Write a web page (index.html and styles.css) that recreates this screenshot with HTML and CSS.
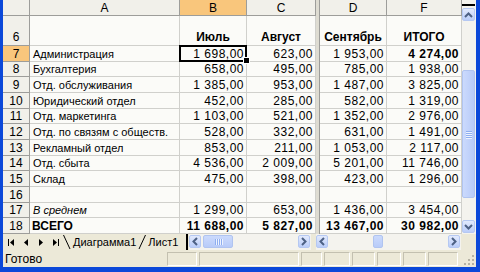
FILE: index.html
```html
<!DOCTYPE html>
<html lang="ru">
<head>
    <meta charset="UTF-8">
    <meta name="viewport" content="width=device-width, initial-scale=1.0">
    <title>Отчёт по отделам</title>
    <link rel="stylesheet" href="styles.css">
</head>
<body>
    <div class="window">
        <div class="main">
            <div class="sheet">
                <div class="row head">
                    <div class="cell hdr"></div>
                    <div class="cell hdr">A</div>
                    <div class="cell hdr active">B</div>
                    <div class="cell hdr">C</div>
                    <div class="split"></div>
                    <div class="cell hdr">D</div>
                    <div class="cell hdr">F</div>
                </div>
                <div class="row tall">
                    <div class="cell hdr">6</div>
                    <div class="cell"></div>
                    <div class="cell mid b">Июль</div>
                    <div class="cell mid b">Август</div>
                    <div class="split"></div>
                    <div class="cell mid b">Сентябрь</div>
                    <div class="cell mid b">ИТОГО</div>
                </div>
                <div class="row">
                    <div class="cell hdr active">7</div>
                    <div class="cell txt">Администрация</div>
                    <div class="cell num sel">1 698,00</div>
                    <div class="cell num">623,00</div>
                    <div class="split"></div>
                    <div class="cell num">1 953,00</div>
                    <div class="cell num b">4 274,00</div>
                </div>
                <div class="row short">
                    <div class="cell hdr">8</div>
                    <div class="cell txt">Бухгалтерия</div>
                    <div class="cell num">658,00</div>
                    <div class="cell num">495,00</div>
                    <div class="split"></div>
                    <div class="cell num">785,00</div>
                    <div class="cell num">1 938,00</div>
                </div>
                <div class="row">
                    <div class="cell hdr">9</div>
                    <div class="cell txt">Отд. обслуживания</div>
                    <div class="cell num">1 385,00</div>
                    <div class="cell num">953,00</div>
                    <div class="split"></div>
                    <div class="cell num">1 487,00</div>
                    <div class="cell num">3 825,00</div>
                </div>
                <div class="row">
                    <div class="cell hdr">10</div>
                    <div class="cell txt">Юридический отдел</div>
                    <div class="cell num">452,00</div>
                    <div class="cell num">285,00</div>
                    <div class="split"></div>
                    <div class="cell num">582,00</div>
                    <div class="cell num">1 319,00</div>
                </div>
                <div class="row short">
                    <div class="cell hdr">11</div>
                    <div class="cell txt">Отд. маркетинга</div>
                    <div class="cell num">1 103,00</div>
                    <div class="cell num">521,00</div>
                    <div class="split"></div>
                    <div class="cell num">1 352,00</div>
                    <div class="cell num">2 976,00</div>
                </div>
                <div class="row">
                    <div class="cell hdr">12</div>
                    <div class="cell txt">Отд. по связям с обществ.</div>
                    <div class="cell num">528,00</div>
                    <div class="cell num">332,00</div>
                    <div class="split"></div>
                    <div class="cell num">631,00</div>
                    <div class="cell num">1 491,00</div>
                </div>
                <div class="row">
                    <div class="cell hdr">13</div>
                    <div class="cell txt">Рекламный отдел</div>
                    <div class="cell num">853,00</div>
                    <div class="cell num">211,00</div>
                    <div class="split"></div>
                    <div class="cell num">1 053,00</div>
                    <div class="cell num">2 117,00</div>
                </div>
                <div class="row short">
                    <div class="cell hdr">14</div>
                    <div class="cell txt">Отд. сбыта</div>
                    <div class="cell num">4 536,00</div>
                    <div class="cell num">2 009,00</div>
                    <div class="split"></div>
                    <div class="cell num">5 201,00</div>
                    <div class="cell num">11 746,00</div>
                </div>
                <div class="row">
                    <div class="cell hdr">15</div>
                    <div class="cell txt">Склад</div>
                    <div class="cell num">475,00</div>
                    <div class="cell num">398,00</div>
                    <div class="split"></div>
                    <div class="cell num">423,00</div>
                    <div class="cell num">1 296,00</div>
                </div>
                <div class="row">
                    <div class="cell hdr">16</div>
                    <div class="cell"></div>
                    <div class="cell"></div>
                    <div class="cell"></div>
                    <div class="split"></div>
                    <div class="cell"></div>
                    <div class="cell"></div>
                </div>
                <div class="row short">
                    <div class="cell hdr">17</div>
                    <div class="cell txt i">В среднем</div>
                    <div class="cell num">1 299,00</div>
                    <div class="cell num">653,00</div>
                    <div class="split"></div>
                    <div class="cell num">1 436,00</div>
                    <div class="cell num">3 454,00</div>
                </div>
                <div class="row">
                    <div class="cell hdr">18</div>
                    <div class="cell b">ВСЕГО</div>
                    <div class="cell num b">11 688,00</div>
                    <div class="cell num b">5 827,00</div>
                    <div class="split"></div>
                    <div class="cell num b">13 467,00</div>
                    <div class="cell num b">30 982,00</div>
                </div>
            </div>

            <!-- vertical scrollbar -->
            <div class="vscroll">
                <div class="vsplit"></div>
                <div class="sbtn">
                    <svg width="9" height="6" viewBox="0 0 9 6"><path d="M1 5 L4.5 1.5 L8 5" /></svg>
                </div>
                <div class="vthumb">
                    <span></span><span></span><span></span><span></span>
                </div>
                <div class="sbtn down">
                    <svg width="9" height="6" viewBox="0 0 9 6"><path d="M1 1 L4.5 4.5 L8 1" /></svg>
                </div>
            </div>
        </div>

        <div class="tabbar">
            <div class="tabnav">
                <span class="navbtn"><svg width="6" height="7" viewBox="0 0 6 7"><rect x="0" y="0" width="1" height="7" /><path d="M6 0 L2 3.5 L6 7 Z" /></svg></span>
                <span class="navbtn"><svg width="4" height="7" viewBox="0 0 4 7"><path d="M4 0 L0 3.5 L4 7 Z" /></svg></span>
                <span class="navbtn"><svg width="4" height="7" viewBox="0 0 4 7"><path d="M0 0 L4 3.5 L0 7 Z" /></svg></span>
                <span class="navbtn"><svg width="6" height="7" viewBox="0 0 6 7"><path d="M0 0 L4 3.5 L0 7 Z" /><rect x="5" y="0" width="1" height="7" /></svg></span>
            </div>
            <div class="tabs">
                <svg class="slant" width="8" height="16" viewBox="0 0 8 16"><path d="M0.5 1 L7 15" /></svg>
                <span class="tab">Диаграмма1</span>
                <svg class="slant" width="8" height="16" viewBox="0 0 8 16"><path d="M1 15 L7.5 1" /></svg>
                <span class="tab">Лист1</span>
            </div>
            <div class="tabsplit"></div>
            <div class="hscroll pane-left">
                <div class="sbtn">
                    <svg width="6" height="9" viewBox="0 0 6 9"><path d="M5 1 L1.5 4.5 L5 8" /></svg>
                </div>
                <div class="hthumb">
                    <span></span><span></span><span></span><span></span>
                </div>
                <div class="sbtn end">
                    <svg width="6" height="9" viewBox="0 0 6 9"><path d="M1 1 L4.5 4.5 L1 8" /></svg>
                </div>
            </div>
            <div class="hgap"></div>
            <div class="hscroll pane-right">
                <div class="sbtn">
                    <svg width="6" height="9" viewBox="0 0 6 9"><path d="M5 1 L1.5 4.5 L5 8" /></svg>
                </div>
                <div class="hthumb small"></div>
                <div class="sbtn end">
                    <svg width="6" height="9" viewBox="0 0 6 9"><path d="M1 1 L4.5 4.5 L1 8" /></svg>
                </div>
            </div>
        </div>

        <div class="statusbar">
            <span class="status-text">Готово</span>
            <div class="panels">
                <div class="panel w30"></div>
                <div class="panel w100"></div>
                <div class="panel w21"></div>
                <div class="panel w26"></div>
                <div class="panel w23"></div>
                <div class="panel w24"></div>
                <div class="panel w23"></div>
                <div class="panel w30"></div>
            </div>
            <svg class="grip" width="11" height="11" viewBox="0 0 11 11">
                <rect x="8" y="0" width="2" height="2" />
                <rect x="4" y="4" width="2" height="2" />
                <rect x="8" y="4" width="2" height="2" />
                <rect x="0" y="8" width="2" height="2" />
                <rect x="4" y="8" width="2" height="2" />
                <rect x="8" y="8" width="2" height="2" />
            </svg>
        </div>
    </div>
</body>
</html>
```

FILE: styles.css
```css
/* General Styles */
* {
    box-sizing: border-box;
}

body {
    margin: 0;
    font-family: "Liberation Sans", Arial, sans-serif;
    font-size: 12px;
    color: #000;
}

.window {
    width: 480px;
    height: 272px;
    display: flex;
    flex-direction: column;
    border-left: 3px solid #0b48d9;
    border-right: 4px solid #0b48d9;
    border-bottom: 5px solid #0b48d9;
    background: #ece9d8;
    overflow: hidden;
}

.main {
    display: flex;
    height: 234px;
}

/* Grid */
.sheet {
    width: 459px;
    background: #fbfbf8;
}

.row {
    display: grid;
    grid-template-columns: 27px 150px 67px 69px 4px 67px 75px;
    height: 16px;
}

.row.head {
    height: 16px;
}

.row.tall {
    height: 30px;
}

.row.short {
    height: 15px;
}

.cell {
    display: flex;
    align-items: center;
    padding: 0 2px;
    line-height: 14px;
    white-space: nowrap;
    overflow: hidden;
    border-right: 1px solid #d0d0cc;
    border-bottom: 1px solid #d0d0cc;
}

.txt {
    font-size: 11px;
    padding-left: 3px;
}

.hdr {
    justify-content: center;
    background: #f1f0ea;
    border-color: #9d9d9a;
}

.hdr.active {
    background: #f9c67c;
}

.tall .cell {
    align-items: flex-end;
    padding-bottom: 1px;
}

.mid {
    justify-content: center;
}

.num {
    justify-content: flex-end;
    letter-spacing: 0.5px;
}

.b {
    font-weight: bold;
}

.i {
    font-style: italic;
}

.split {
    background: #dedcd2;
    border-right: 1px solid #9d9d9a;
}

.sel {
    position: relative;
    overflow: visible;
}

.sel::before {
    content: "";
    position: absolute;
    left: -1px;
    top: -1px;
    right: -1px;
    bottom: -1px;
    border: 2px solid #000;
}

.sel::after {
    content: "";
    position: absolute;
    right: -4px;
    bottom: -3px;
    width: 5px;
    height: 5px;
    background: #000;
    border: 1px solid #fff;
}

/* Scrollbars */
.vscroll {
    width: 14px;
    display: flex;
    flex-direction: column;
    background: #f4f3ee;
    padding-top: 4px;
}

.vsplit {
    height: 2px;
    margin-right: 1px;
    background: #000;
}

.sbtn {
    width: 13px;
    height: 13px;
    display: flex;
    align-items: center;
    justify-content: center;
    border: 1px solid #b5c8f2;
    border-radius: 2px;
    background: linear-gradient(#e2eafd, #bacdf9);
    flex-shrink: 0;
}

.vscroll .sbtn {
    margin-top: 2px;
}

.vscroll .sbtn.down {
    margin-top: auto;
    margin-bottom: 1px;
}

.sbtn svg path {
    fill: none;
    stroke: #4d6185;
    stroke-width: 2;
}

.vthumb {
    width: 13px;
    height: 128px;
    margin-top: 49px;
    display: flex;
    flex-direction: column;
    align-items: center;
    justify-content: center;
    gap: 1px;
    border: 1px solid #b0c4f0;
    border-radius: 2px;
    background: linear-gradient(90deg, #cbdafd, #b8cbf8);
}

.vthumb span {
    width: 6px;
    height: 1px;
    background: #8eaef0;
    box-shadow: 0 1px 0 #eef3fe;
}

/* Sheet tabs */
.tabbar {
    display: flex;
    height: 16px;
}

.tabnav {
    width: 60px;
    display: flex;
}

.navbtn {
    width: 15px;
    display: flex;
    align-items: center;
    justify-content: center;
}

.tabs {
    width: 123px;
    display: flex;
    align-items: center;
    overflow: hidden;
    white-space: nowrap;
}

.slant path {
    stroke: #000;
    stroke-width: 1;
}

.tab {
    font-size: 11px;
    padding: 0 2px;
}

.tabsplit {
    width: 3px;
    border-left: 2px solid #000;
}

.hscroll {
    display: flex;
    padding-top: 1px;
    background: #f4f3ee;
}

.pane-left {
    width: 122px;
}

.pane-right {
    width: 145px;
}

.hgap {
    width: 5px;
}

.hscroll .sbtn {
    width: 12px;
}

.hscroll .sbtn.end {
    margin-left: auto;
    margin-right: 1px;
}

.hthumb {
    width: 30px;
    height: 13px;
    margin-left: 2px;
    display: flex;
    align-items: center;
    justify-content: center;
    gap: 1px;
    border: 1px solid #b0c4f0;
    border-radius: 2px;
    background: linear-gradient(#cbdafd, #b8cbf8);
}

.hthumb.small {
    width: 10px;
    margin-left: 45px;
}

.hthumb span {
    width: 1px;
    height: 6px;
    background: #8eaef0;
    box-shadow: 1px 0 0 #eef3fe;
}

/* Status bar */
.statusbar {
    display: flex;
    align-items: center;
    height: 17px;
}

.status-text {
    width: 164px;
    padding-left: 2px;
}

.panels {
    display: flex;
    gap: 2px;
    height: 14px;
}

.panel {
    border: 1px solid #c3c0b0;
    border-right-color: #fff;
    border-bottom-color: #fff;
}

.w21 { width: 21px; }
.w23 { width: 23px; }
.w24 { width: 24px; }
.w26 { width: 26px; }
.w30 { width: 30px; }
.w100 { width: 100px; }

.grip {
    margin-left: auto;
    margin-right: 1px;
    align-self: flex-end;
    margin-bottom: 1px;
    fill: #b5b2a4;
}
```
